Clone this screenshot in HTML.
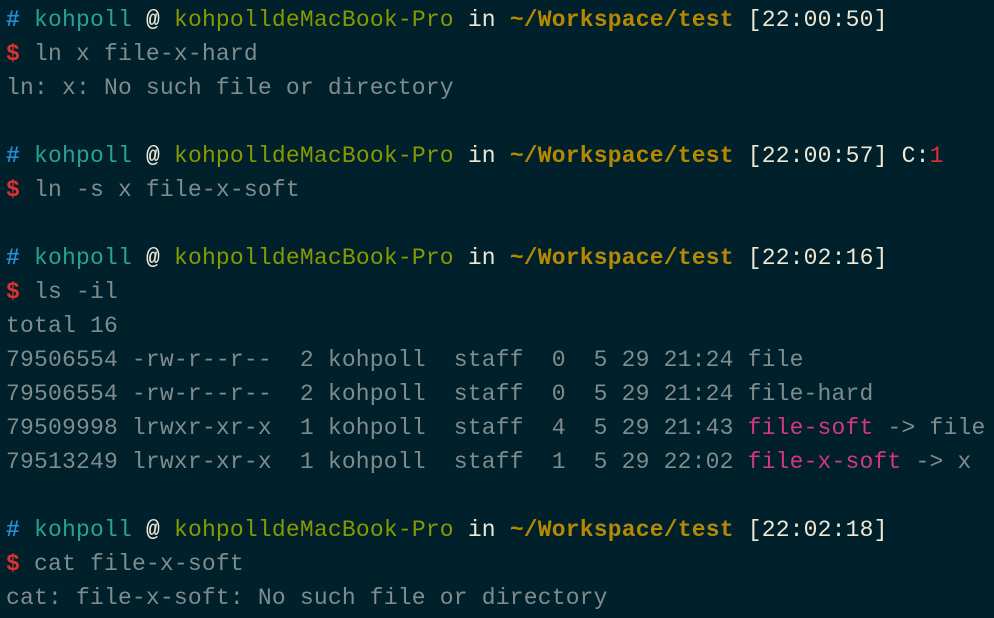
<!DOCTYPE html>
<html><head><meta charset="utf-8"><style>
html,body{margin:0;padding:0;background:#00202b;width:994px;height:618px;overflow:hidden}
pre{margin:0;padding:3px 0 0 6px;font-family:"Liberation Mono",monospace;font-size:23px;letter-spacing:0.19px;line-height:34px;color:#7f8c8d;white-space:pre}
.b{color:#268bd2;font-weight:bold}
.u{color:#2aa198}
.w{color:#eee8d5;font-weight:bold}
.h{color:#859900}
.i{color:#eee8d5}
.p{color:#b58900;font-weight:bold}
.t{color:#eee8d5}
.d{color:#dc322f;font-weight:bold}
.r{color:#dc322f}
.m{color:#d33682}
</style></head><body><pre><span class="b">#</span> <span class="u">kohpoll</span> <span class="w">@</span> <span class="h">kohpolldeMacBook-Pro</span> <span class="i">in</span> <span class="p">~/Workspace/test</span> <span class="t">[22:00:50]</span>
<span class="d">$</span> ln x file-x-hard
ln: x: No such file or directory

<span class="b">#</span> <span class="u">kohpoll</span> <span class="w">@</span> <span class="h">kohpolldeMacBook-Pro</span> <span class="i">in</span> <span class="p">~/Workspace/test</span> <span class="t">[22:00:57]</span> <span class="t">C:</span><span class="r">1</span>
<span class="d">$</span> ln -s x file-x-soft

<span class="b">#</span> <span class="u">kohpoll</span> <span class="w">@</span> <span class="h">kohpolldeMacBook-Pro</span> <span class="i">in</span> <span class="p">~/Workspace/test</span> <span class="t">[22:02:16]</span>
<span class="d">$</span> ls -il
total 16
79506554 -rw-r--r--  2 kohpoll  staff  0  5 29 21:24 file
79506554 -rw-r--r--  2 kohpoll  staff  0  5 29 21:24 file-hard
79509998 lrwxr-xr-x  1 kohpoll  staff  4  5 29 21:43 <span class="m">file-soft</span> -&gt; file
79513249 lrwxr-xr-x  1 kohpoll  staff  1  5 29 22:02 <span class="m">file-x-soft</span> -&gt; x

<span class="b">#</span> <span class="u">kohpoll</span> <span class="w">@</span> <span class="h">kohpolldeMacBook-Pro</span> <span class="i">in</span> <span class="p">~/Workspace/test</span> <span class="t">[22:02:18]</span>
<span class="d">$</span> cat file-x-soft
cat: file-x-soft: No such file or directory</pre></body></html>
